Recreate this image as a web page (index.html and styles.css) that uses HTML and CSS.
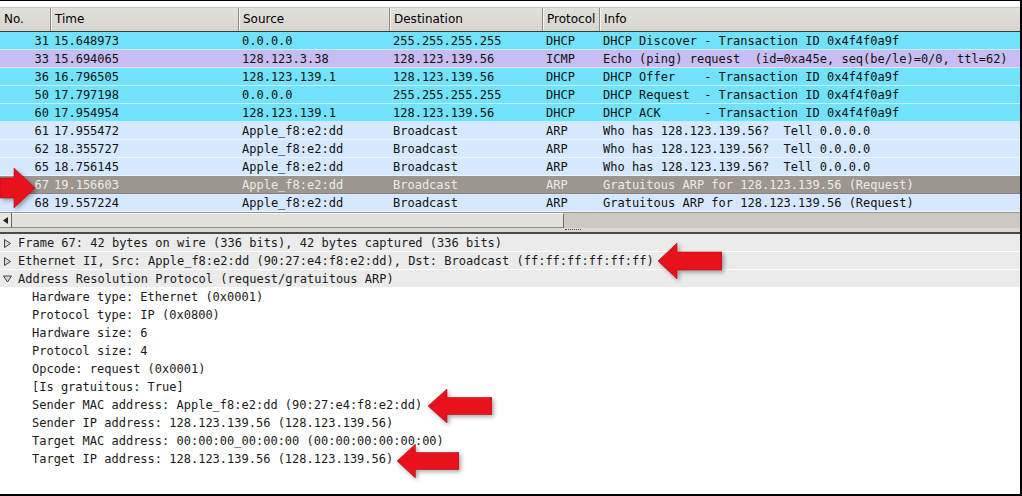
FILE: index.html
```html
<!DOCTYPE html>
<html>
<head>
<meta charset="utf-8">
<link rel="stylesheet" href="styles.css">
</head>
<body>
<div class="window">
  <div class="topstrip"></div>
  <div class="list">
    <div class="thead">
      <div class="th c-no">No.</div>
      <div class="th">Time</div>
      <div class="th">Source</div>
      <div class="th">Destination</div>
      <div class="th">Protocol</div>
      <div class="th">Info</div>
    </div>
    <div class="row dhcp"><span class="c-no">31</span><span>15.648973</span><span>0.0.0.0</span><span>255.255.255.255</span><span>DHCP</span><span>DHCP Discover - Transaction ID 0x4f4f0a9f</span></div>
    <div class="row icmp"><span class="c-no">33</span><span>15.694065</span><span>128.123.3.38</span><span>128.123.139.56</span><span>ICMP</span><span>Echo (ping) request  (id=0xa45e, seq(be/le)=0/0, ttl=62)</span></div>
    <div class="row dhcp"><span class="c-no">36</span><span>16.796505</span><span>128.123.139.1</span><span>128.123.139.56</span><span>DHCP</span><span>DHCP Offer    - Transaction ID 0x4f4f0a9f</span></div>
    <div class="row dhcp"><span class="c-no">50</span><span>17.797198</span><span>0.0.0.0</span><span>255.255.255.255</span><span>DHCP</span><span>DHCP Request  - Transaction ID 0x4f4f0a9f</span></div>
    <div class="row dhcp"><span class="c-no">60</span><span>17.954954</span><span>128.123.139.1</span><span>128.123.139.56</span><span>DHCP</span><span>DHCP ACK      - Transaction ID 0x4f4f0a9f</span></div>
    <div class="row arp"><span class="c-no">61</span><span>17.955472</span><span>Apple_f8:e2:dd</span><span>Broadcast</span><span>ARP</span><span>Who has 128.123.139.56?  Tell 0.0.0.0</span></div>
    <div class="row arp"><span class="c-no">62</span><span>18.355727</span><span>Apple_f8:e2:dd</span><span>Broadcast</span><span>ARP</span><span>Who has 128.123.139.56?  Tell 0.0.0.0</span></div>
    <div class="row arp"><span class="c-no">65</span><span>18.756145</span><span>Apple_f8:e2:dd</span><span>Broadcast</span><span>ARP</span><span>Who has 128.123.139.56?  Tell 0.0.0.0</span></div>
    <div class="row sel"><span class="c-no">67</span><span>19.156603</span><span>Apple_f8:e2:dd</span><span>Broadcast</span><span>ARP</span><span>Gratuitous ARP for 128.123.139.56 (Request)</span></div>
    <div class="row arp"><span class="c-no">68</span><span>19.557224</span><span>Apple_f8:e2:dd</span><span>Broadcast</span><span>ARP</span><span>Gratuitous ARP for 128.123.139.56 (Request)</span></div>
  </div>
  <div class="hscroll">
    <div class="sb-btn"><svg width="5" height="7" viewBox="0 0 5 7"><polygon points="5,0 0,3.5 5,7" fill="#222"/></svg></div>
    <div class="sb-thumb"></div>
    <div class="sb-trough"></div>
  </div>
  <div class="splitter"><span class="grip"></span></div>
  <div class="details">
    <div class="dl top"><svg class="tri" width="8" height="9" viewBox="0 0 8 9"><polygon points="1,0.5 7,4.5 1,8.5" fill="#d8d8d8" stroke="#444" stroke-width="1"/></svg>Frame 67: 42 bytes on wire (336 bits), 42 bytes captured (336 bits)</div>
    <div class="dl top"><svg class="tri" width="8" height="9" viewBox="0 0 8 9"><polygon points="1,0.5 7,4.5 1,8.5" fill="#d8d8d8" stroke="#444" stroke-width="1"/></svg>Ethernet II, Src: Apple_f8:e2:dd (90:27:e4:f8:e2:dd), Dst: Broadcast (ff:ff:ff:ff:ff:ff)</div>
    <div class="dl top"><svg class="tri" width="9" height="8" viewBox="0 0 9 8"><polygon points="0.5,1 8.5,1 4.5,7" fill="#d8d8d8" stroke="#444" stroke-width="1"/></svg>Address Resolution Protocol (request/gratuitous ARP)</div>
    <div class="dl sub">Hardware type: Ethernet (0x0001)</div>
    <div class="dl sub">Protocol type: IP (0x0800)</div>
    <div class="dl sub">Hardware size: 6</div>
    <div class="dl sub">Protocol size: 4</div>
    <div class="dl sub">Opcode: request (0x0001)</div>
    <div class="dl sub">[Is gratuitous: True]</div>
    <div class="dl sub">Sender MAC address: Apple_f8:e2:dd (90:27:e4:f8:e2:dd)</div>
    <div class="dl sub">Sender IP address: 128.123.139.56 (128.123.139.56)</div>
    <div class="dl sub">Target MAC address: 00:00:00_00:00:00 (00:00:00:00:00:00)</div>
    <div class="dl sub">Target IP address: 128.123.139.56 (128.123.139.56)</div>
  </div>

  <svg class="arrow a-row" viewBox="0 0 36 40" preserveAspectRatio="none"><polygon points="0,10 14,10 14,0 35,20 14,40 14,30 0,30" /></svg>
  <svg class="arrow a-eth" viewBox="0 0 64 36" preserveAspectRatio="none"><polygon points="0,18 19,0 19,9 64,9 64,27 19,27 19,36" /></svg>
  <svg class="arrow a-mac" viewBox="0 0 64 36" preserveAspectRatio="none"><polygon points="0,18 19,0 19,9 64,9 64,27 19,27 19,36" /></svg>
  <svg class="arrow a-ip" viewBox="0 0 64 36" preserveAspectRatio="none"><polygon points="0,18 19,0 19,9 64,9 64,27 19,27 19,36" /></svg>
</div>
</body>
</html>
```

FILE: styles.css
```css
html, body {
  margin: 0;
  padding: 0;
  background: #ffffff;
}

.window {
  position: relative;
  width: 1022px;
  height: 496px;
  box-sizing: border-box;
  border-top: 1px solid #000;
  border-right: 2px solid #000;
  border-bottom: 2px solid #000;
  background: #ffffff;
  display: flex;
  flex-direction: column;
  overflow: hidden;
  font-family: "DejaVu Sans Mono", monospace;
  font-size: 12px;
  color: #111;
}

.topstrip {
  height: 6px;
  flex: none;
  background: #ffffff;
  border-bottom: 1px solid #c8c6c2;
}

.thead {
  display: grid;
  grid-template-columns: 50px 188px 151px 153px 57px 1fr;
  height: 24px;
  box-sizing: border-box;
  background: linear-gradient(#e2e0dc, #d8d5d0);
  border-bottom: 1px solid #3a3a3a;
  font-family: "DejaVu Sans", sans-serif;
  font-size: 12px;
  color: #000;
}

.th {
  line-height: 23px;
  padding-left: 4px;
  border-left: 1px solid #8e8b86;
  box-shadow: inset 1px 0 0 #f4f3f1;
}

.th.c-no {
  border-left: none;
  box-shadow: none;
}

.row {
  display: grid;
  grid-template-columns: 50px 188px 151px 153px 57px 1fr;
  height: 18px;
  box-sizing: border-box;
  padding-top: 2px;
  border-bottom: 1px solid rgba(255, 255, 255, 0.55);
  line-height: 15px;
  white-space: pre;
  color: #111;
}

.row span {
  padding-left: 4px;
  overflow: hidden;
}

.row span.c-no {
  padding-left: 0;
  padding-right: 1px;
  text-align: right;
}

.dhcp { background: #72e2fa; }
.icmp { background: #c8bcf4; }
.arp { background: #d6e8ff; }
.sel {
  background: #9d968f;
  color: #ecebe8;
  border-bottom-color: #8a847e;
}

.hscroll {
  display: flex;
  flex: none;
  height: 16px;
  box-sizing: border-box;
  background: #d4d0ca;
  border-top: 1px solid #9a968f;
}

.sb-btn {
  width: 12px;
  box-sizing: border-box;
  display: flex;
  align-items: center;
  justify-content: center;
  background: #e8e6e2;
  border-right: 1px solid #6f6c68;
  border-bottom: 1px solid #8e8a84;
}

.sb-thumb {
  width: 552px;
  box-sizing: border-box;
  background: #e4e1dd;
  border-top: 1px solid #f7f6f4;
  border-right: 1px solid #6f6c68;
  border-bottom: 1px solid #8e8a84;
}

.sb-trough {
  flex: 1;
  background: #cdc9c2;
}

.splitter {
  height: 6px;
  flex: none;
  box-sizing: border-box;
  background: #dcd9d4;
  border-bottom: 2px solid #4a4a4a;
  position: relative;
}

.grip {
  position: absolute;
  left: 565px;
  top: 1px;
  width: 16px;
  border-top: 1px dotted #444;
}

.details {
  flex: 1;
  background: #ffffff;
}

.dl {
  height: 18px;
  box-sizing: border-box;
  padding-top: 1px;
  line-height: 17px;
  white-space: pre;
  color: #1a1a1a;
}

.dl.top {
  display: flex;
  align-items: center;
  background: #ebebeb;
  border-bottom: 1px solid #ffffff;
  padding-left: 3px;
}

.tri {
  width: 9px;
  margin-right: 6px;
  flex: none;
}

.dl.sub {
  padding-left: 32px;
}

.arrow {
  position: absolute;
  fill: #e8121c;
  stroke: #b00a12;
  stroke-width: 0.6;
  filter: drop-shadow(2px 2px 2px rgba(0, 0, 0, 0.35));
}

.a-row { left: 0; top: 167px; width: 36px; height: 40px; }
.a-eth { left: 658px; top: 242px; width: 64px; height: 36px; }
.a-mac { left: 428px; top: 388px; width: 64px; height: 34px; }
.a-ip { left: 397px; top: 443px; width: 62px; height: 34px; }
```
